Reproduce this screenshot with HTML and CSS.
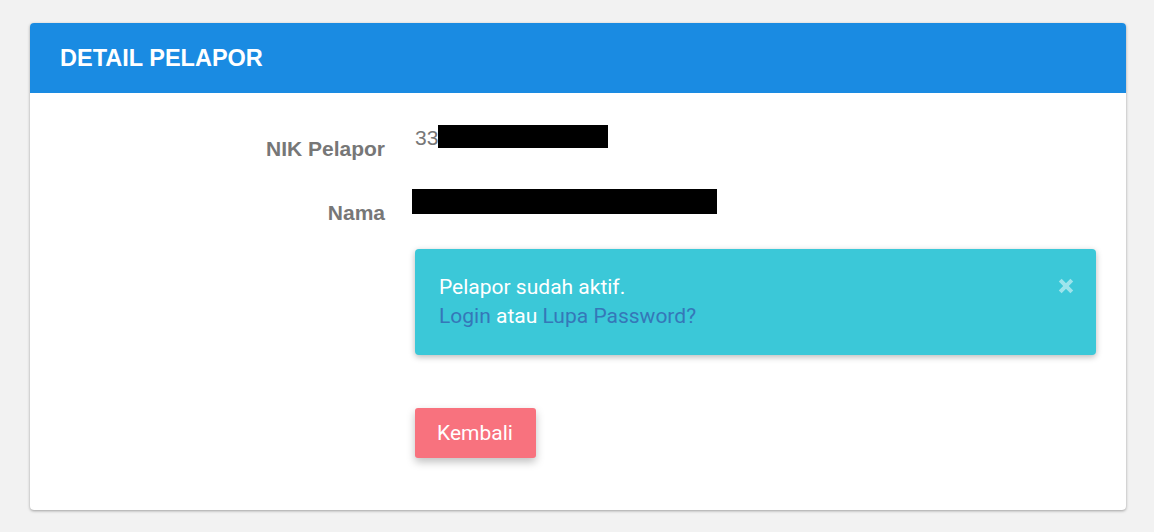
FILE: index.html
```html
<!DOCTYPE html>
<html lang="id">
<head>
<meta charset="utf-8">
<title>Detail Pelapor</title>
<link rel="stylesheet" href="styles.css">
</head>
<body>
<div class="card">
  <div class="card-header">
    <h2 class="card-title">DETAIL PELAPOR</h2>
  </div>
  <div class="card-body">
    <div class="form-row">
      <label class="form-label">NIK Pelapor</label>
      <div class="form-value form-value-text">33<span class="redact redact-nik"></span></div>
    </div>
    <div class="form-row">
      <label class="form-label">Nama</label>
      <div class="form-value"><span class="redact redact-nama"></span></div>
    </div>
    <div class="form-row form-row-offset">
      <div class="alert">
        <div class="alert-text">
          <div>Pelapor sudah aktif.</div>
          <div><a class="alert-link" href="#">Login</a> atau <a class="alert-link" href="#">Lupa Password?</a></div>
        </div>
        <button class="alert-close" type="button" aria-label="Tutup">
          <svg width="18" height="18" viewBox="0 0 18 18"><path d="M3.2 3.2 L14.8 14.8 M14.8 3.2 L3.2 14.8" stroke="currentColor" stroke-width="4" stroke-linecap="butt"/></svg>
        </button>
      </div>
    </div>
    <div class="form-row form-row-offset">
      <button class="btn-back" type="button">Kembali</button>
    </div>
  </div>
</div>
</body>
</html>
```
FILE: styles.css
```css
html, body {
  margin: 0;
  padding: 0;
}
body {
  background: #f2f2f2;
  padding: 23px 28px 20px 30px;
  font-family: "Liberation Sans", Arial, sans-serif;
}
.card {
  background: #ffffff;
  border-radius: 4px;
  box-shadow: 0 1px 3px rgba(0, 0, 0, 0.35);
  overflow: hidden;
  height: 487px;
}
.card-header {
  background: #1a8be2;
  height: 70px;
  padding: 0 30px;
  display: flex;
  align-items: center;
}
.card-title {
  margin: 0;
  color: #ffffff;
  font-size: 23.5px;
  font-weight: bold;
  line-height: 28px;
}
.card-body {
  padding: 32px 30px 0 0;
}
.form-row {
  display: grid;
  grid-template-columns: 355px 1fr;
  column-gap: 27px;
  margin-bottom: 28px;
}
.form-label {
  text-align: right;
  font-size: 21px;
  line-height: 25px;
  font-weight: bold;
  color: #777777;
  padding-top: 11px;
}
.form-value {
  font-size: 21px;
  line-height: 25px;
  color: #777777;
}
.form-value-text {
  padding-left: 3px;
}
.redact {
  display: inline-block;
  background: #000000;
  vertical-align: top;
}
.redact-nik {
  width: 170px;
  height: 23px;
}
.redact-nama {
  width: 305px;
  height: 25px;
}
.form-row-offset {
  margin-bottom: 0;
}
.form-row-offset > * {
  grid-column: 2;
  margin-left: 3px;
}
.alert {
  margin-top: -4px;
  background: #3bc8d8;
  border-radius: 4px;
  box-shadow: 0 2px 6px rgba(0, 0, 0, 0.28);
  padding: 24px 24px;
  display: flex;
  justify-content: space-between;
  align-items: flex-start;
  font-family: Roboto, "Noto Sans", sans-serif;
  font-size: 21px;
  line-height: 29px;
  color: #ffffff;
}
.alert-link {
  color: #3577b8;
  text-decoration: none;
}
.alert-close {
  background: none;
  border: 0;
  padding: 0;
  margin: 4px -3px 0 0;
  color: rgba(255, 255, 255, 0.5);
  width: 18px;
  height: 18px;
  display: flex;
}
.btn-back {
  justify-self: start;
  margin-top: 53px;
  background: #f8727e;
  color: #ffffff;
  border: 0;
  border-radius: 3px;
  box-shadow: 0 4px 9px rgba(0, 0, 0, 0.25);
  font-family: Roboto, "Noto Sans", sans-serif;
  font-size: 21px;
  line-height: 25px;
  height: 50px;
  padding: 0 23px 0 22px;
}
```
